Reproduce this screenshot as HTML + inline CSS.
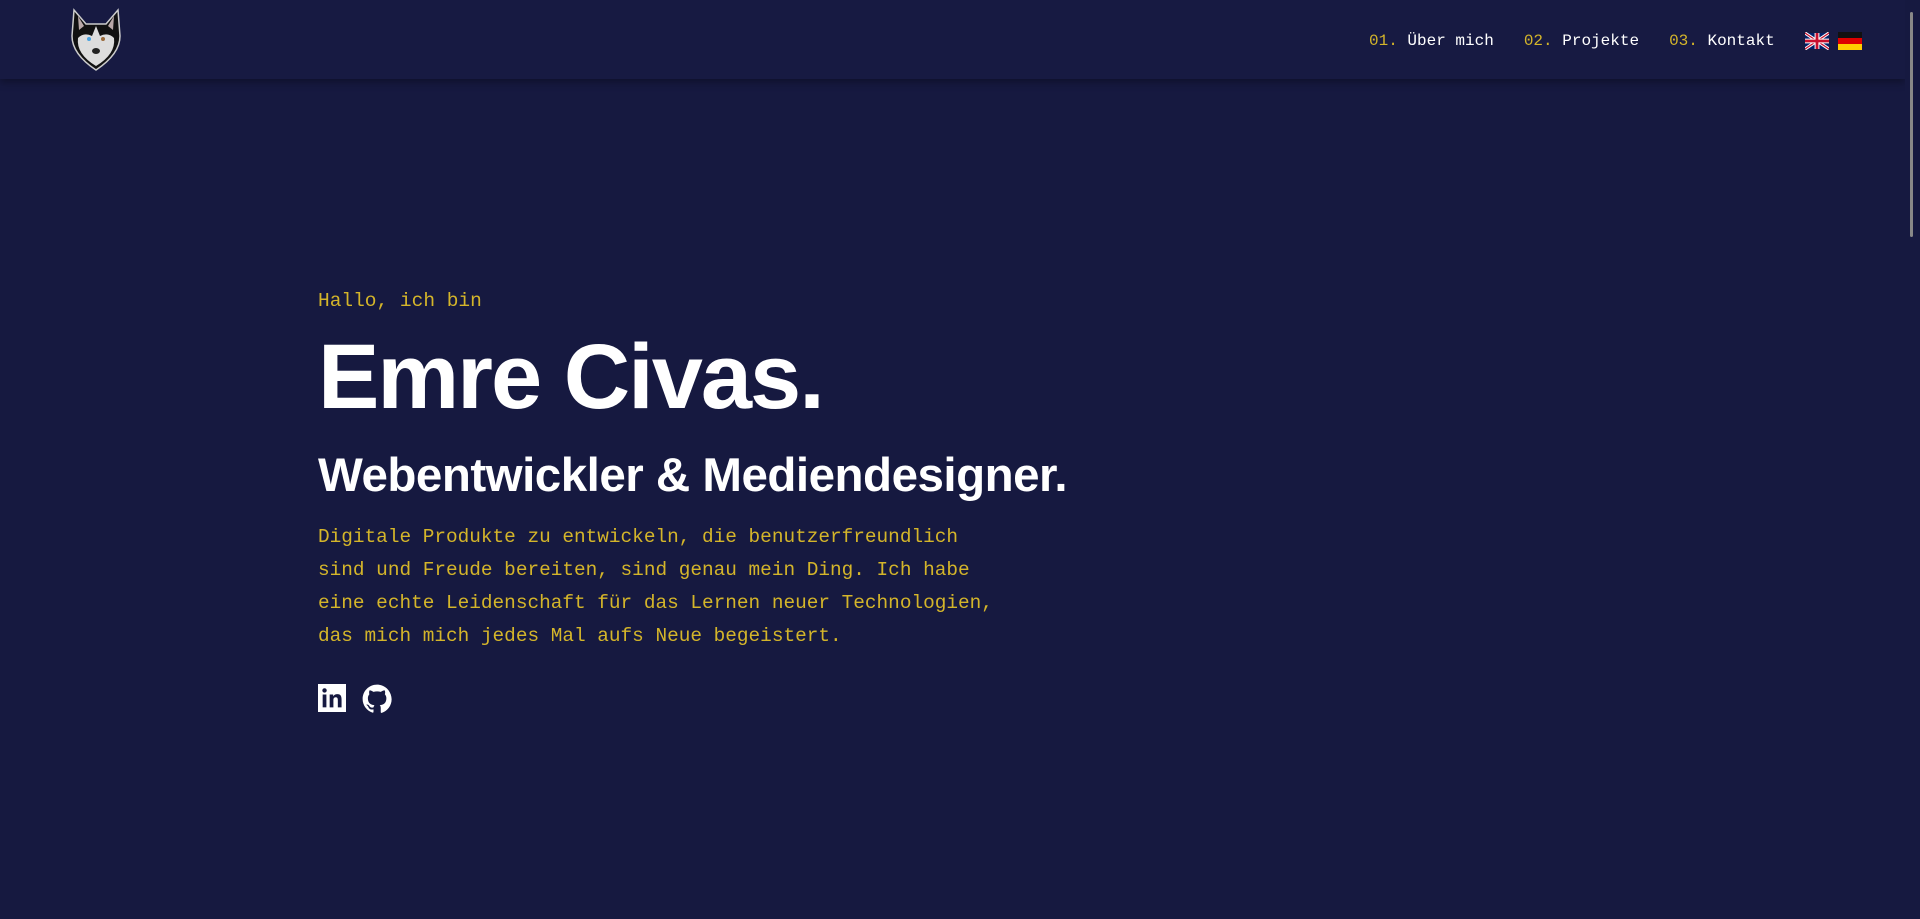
<!DOCTYPE html>
<html><head><meta charset="utf-8"><style>
*{margin:0;padding:0;box-sizing:border-box}
html,body{width:1920px;height:919px;overflow:hidden;background:#161940;}
header{position:absolute;left:0;top:0;width:1905px;height:79px;background:#171a42;box-shadow:0 3px 8px rgba(0,0,0,.35);}
.logo{position:absolute;left:70px;top:6px;}
nav{position:absolute;left:1369px;top:32px;font:16px "Liberation Mono",monospace;color:#fff;white-space:nowrap}
nav span{margin-right:30px}
nav b{font-weight:normal;color:#d4b52a}
.flags{position:absolute;left:1805px;top:32px;display:flex;gap:9px}
.sb{position:absolute;right:0;top:0;width:15px;height:919px;background:#161940}
.sb i{position:absolute;left:5px;top:12px;width:3px;height:225px;background:#888;border-radius:2px}
.hero{position:absolute;left:318px;top:0;}
.hi{position:absolute;top:290px;font:19.5px "Liberation Mono",monospace;color:#d4b52a;white-space:nowrap}
h1{position:absolute;top:325px;font:bold 92px "Liberation Sans",sans-serif;color:#fff;white-space:nowrap;letter-spacing:-2px}
h2{position:absolute;top:448px;font:bold 47.5px "Liberation Sans",sans-serif;color:#fff;white-space:nowrap;letter-spacing:-0.5px}
p{position:absolute;top:521px;width:700px;font:19.4px/33px "Liberation Mono",monospace;color:#d4b52a;white-space:nowrap}
.ic{position:absolute;top:684px;display:flex;gap:16px}
</style></head><body>
<header>
<svg class="logo" width="52" height="66" viewBox="0 0 52 66">
<path d="M4 4 L16 18 L36 18 L48 4 L50 30 Q50 48 26 64 Q2 48 2 30 Z" fill="#111" stroke="#ccc" stroke-width="1.5"/>
<path d="M8 10 L14 20 L9 24 Z M44 10 L38 20 L43 24 Z" fill="#b9a8a8"/>
<path d="M8 32 Q14 26 22 30 L26 20 L30 30 Q38 26 44 32 Q46 48 26 60 Q6 48 8 32Z" fill="#ddd"/>
<circle cx="19" cy="33" r="2" fill="#4aa3e0"/><circle cx="33" cy="33" r="2" fill="#9a6a3a"/>
<ellipse cx="26" cy="45" rx="4" ry="3" fill="#222"/>
</svg>
<nav><span><b>01.</b> Über mich</span><span><b>02.</b> Projekte</span><span><b>03.</b> Kontakt</span></nav>
<div class="flags">
<svg width="24" height="18" viewBox="0 0 60 40"><rect width="60" height="40" fill="#012169"/><path d="M0 0L60 40M60 0L0 40" stroke="#fff" stroke-width="8"/><path d="M0 0L60 40M60 0L0 40" stroke="#c8102e" stroke-width="3"/><path d="M30 0V40M0 20H60" stroke="#fff" stroke-width="12"/><path d="M30 0V40M0 20H60" stroke="#c8102e" stroke-width="7"/></svg>
<svg width="24" height="18" viewBox="0 0 24 18"><rect width="24" height="6" fill="#111"/><rect y="6" width="24" height="6" fill="#dd0000"/><rect y="12" width="24" height="6" fill="#ffce00"/></svg>
</div>
</header>
<div class="sb"><i></i></div>
<div class="hero">
<div class="hi">Hallo, ich bin</div>
<h1>Emre Civas.</h1>
<h2>Webentwickler &amp; Mediendesigner.</h2>
<p>Digitale Produkte zu entwickeln, die benutzerfreundlich<br>sind und Freude bereiten, sind genau mein Ding. Ich habe<br>eine echte Leidenschaft für das Lernen neuer Technologien,<br>das mich mich jedes Mal aufs Neue begeistert.</p>
<div class="ic">
<svg width="28" height="28" viewBox="0 0 24 24"><rect width="24" height="24" fill="#fff"/><rect x="4" y="9" width="3.2" height="11" fill="#161940"/><circle cx="5.6" cy="5.5" r="1.9" fill="#161940"/><path d="M10 9h3v1.6c.6-1 1.8-1.9 3.6-1.9 3 0 3.6 2 3.6 4.6V20h-3.2v-5.8c0-1.4-.1-2.8-1.8-2.8s-2 1.3-2 2.7V20H10z" fill="#161940"/></svg>
<svg width="30" height="30" viewBox="0 0 24 24"><path fill="#fff" d="M12 .5C5.6.5.5 5.6.5 12c0 5.1 3.3 9.4 7.9 10.9.6.1.8-.2.8-.6v-2c-3.2.7-3.900-1.500-3.900-1.500-.5-1.300-1.300-1.700-1.300-1.700-1-.7.1-.7.1-.7 1.2.1 1.8 1.2 1.8 1.2 1 1.8 2.7 1.3 3.4 1 .1-.8.4-1.3.7-1.6-2.6-.3-5.3-1.3-5.3-5.7 0-1.3.5-2.3 1.2-3.1-.1-.3-.5-1.5.1-3.1 0 0 1-.3 3.2 1.2a11 11 0 0 1 5.8 0c2.2-1.5 3.2-1.2 3.2-1.2.6 1.6.2 2.8.1 3.1.7.8 1.2 1.9 1.2 3.1 0 4.4-2.7 5.4-5.3 5.7.4.4.8 1.1.8 2.2v3.3c0 .3.2.7.8.6 4.6-1.5 7.9-5.8 7.9-10.9C23.5 5.6 18.4.5 12 .5z"/></svg>
</div>
</div>
</body></html>
